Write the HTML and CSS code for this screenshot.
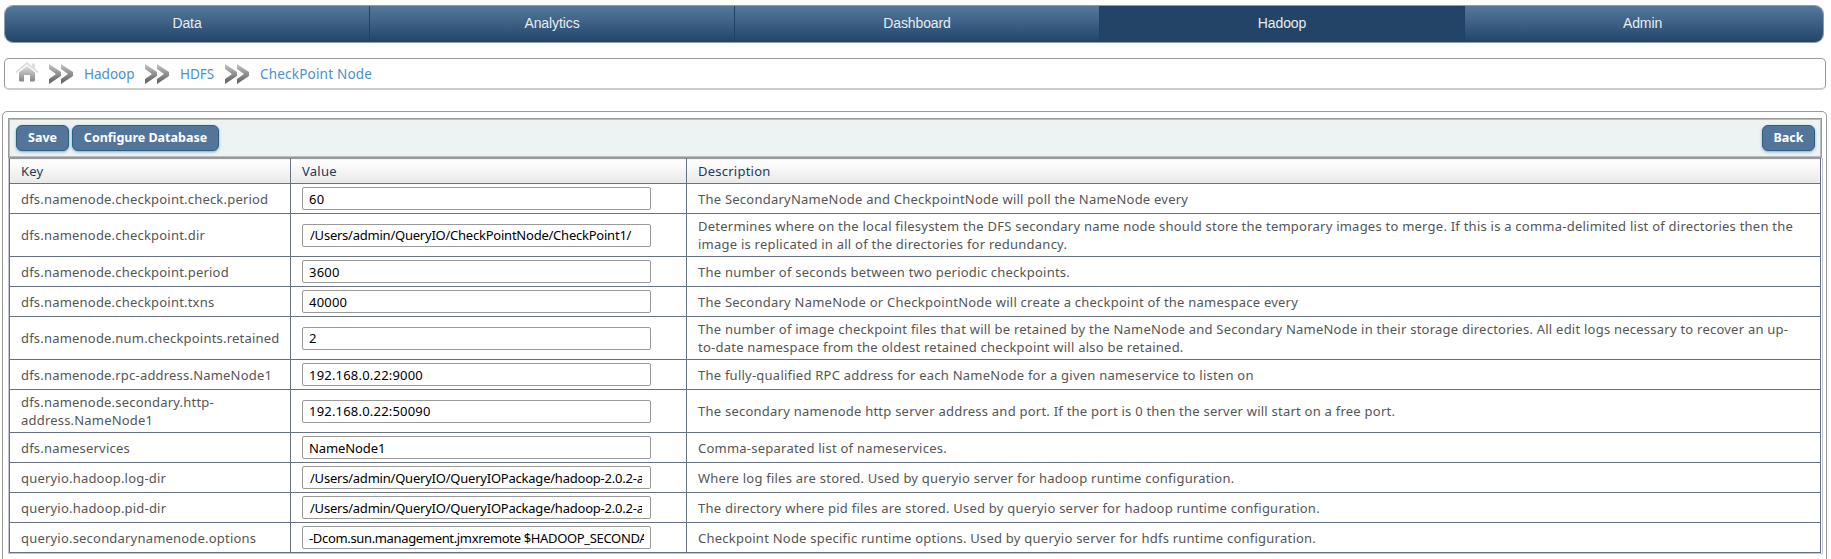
FILE: index.html
```html
<!DOCTYPE html>
<html lang="en">
<head>
<meta charset="utf-8">
<title>CheckPoint Node</title>
<link rel="stylesheet" href="styles.css">
</head>
<body>
<svg class="defs" width="0" height="0" aria-hidden="true">
  <defs>
    <linearGradient id="grey" x1="0" y1="0" x2="0" y2="1"><stop offset="0" stop-color="#c4c4c4"/><stop offset="1" stop-color="#5c5c5c"/></linearGradient>
    <linearGradient id="house" x1="0" y1="0" x2="0" y2="1"><stop offset="0" stop-color="#dedede"/><stop offset="1" stop-color="#858585"/></linearGradient>
    <symbol id="chev" viewBox="0 0 26 22"><path fill="url(#grey)" d="M1 1 13 9v4L1 21v-5l7-5-7-5zM13 1l12 8v4l-12 8v-5l7-5-7-5z"/></symbol>
  </defs>
</svg>
<nav class="nav">
  <a>Data</a><a>Analytics</a><a>Dashboard</a><a class="active">Hadoop</a><a>Admin</a>
</nav>
<div class="crumbs">
  <svg class="home" viewBox="0 0 24 20"><path fill="#dedede" d="M12 0 17 4V1.500h3V6.500l4 3.500-1.500 1L12 2.500 1.500 11 0 10z"/><path fill="url(#house)" d="M12 4 20 10.500V18q0 1.500-1.500 1.500H15V13H9v6.500H5.500Q4 19.500 4 18v-7.500z"/></svg>
  <svg class="chev"><use href="#chev"/></svg><a class="c1">Hadoop</a>
  <svg class="chev"><use href="#chev"/></svg><a class="c2">HDFS</a>
  <svg class="chev"><use href="#chev"/></svg><a class="c3">CheckPoint Node</a>
</div>
<main class="panel">
  <div class="toolbar">
    <button class="btn save">Save</button><button class="btn config">Configure Database</button><button class="btn back">Back</button>
  </div>
  <div class="frame">
  <table class="grid">
    <colgroup><col class="k"><col class="v"><col></colgroup>
    <thead><tr><th>Key</th><th>Value</th><th>Description</th></tr></thead>
    <tbody>
      <tr><td>dfs.namenode.checkpoint.check.period</td><td><input value="60"></td><td>The SecondaryNameNode and CheckpointNode will poll the NameNode every</td></tr>
      <tr class="tall"><td>dfs.namenode.checkpoint.dir</td><td><input class="path" value="/Users/admin/QueryIO/CheckPointNode/CheckPoint1/"></td><td>Determines where on the local filesystem the DFS secondary name node should store the temporary images to merge. If this is a comma-delimited list of directories then the<br>image is replicated in all of the directories for redundancy.</td></tr>
      <tr><td>dfs.namenode.checkpoint.period</td><td><input value="3600"></td><td>The number of seconds between two periodic checkpoints.</td></tr>
      <tr><td>dfs.namenode.checkpoint.txns</td><td><input value="40000"></td><td>The Secondary NameNode or CheckpointNode will create a checkpoint of the namespace every</td></tr>
      <tr class="tall"><td>dfs.namenode.num.checkpoints.retained</td><td><input value="2"></td><td>The number of image checkpoint files that will be retained by the NameNode and Secondary NameNode in their storage directories. All edit logs necessary to recover an up-<br>to-date namespace from the oldest retained checkpoint will also be retained.</td></tr>
      <tr><td>dfs.namenode.rpc-address.NameNode1</td><td><input value="192.168.0.22:9000"></td><td>The fully-qualified RPC address for each NameNode for a given nameservice to listen on</td></tr>
      <tr class="tall"><td>dfs.namenode.secondary.http-<br>address.NameNode1</td><td><input value="192.168.0.22:50090"></td><td>The secondary namenode http server address and port. If the port is 0 then the server will start on a free port.</td></tr>
      <tr><td>dfs.nameservices</td><td><input class="name" value="NameNode1"></td><td>Comma-separated list of nameservices.</td></tr>
      <tr><td>queryio.hadoop.log-dir</td><td><input class="path" value="/Users/admin/QueryIO/QueryIOPackage/hadoop-2.0.2-alpha/logs"></td><td>Where log files are stored. Used by queryio server for hadoop runtime configuration.</td></tr>
      <tr><td>queryio.hadoop.pid-dir</td><td><input class="path" value="/Users/admin/QueryIO/QueryIOPackage/hadoop-2.0.2-alpha/pids"></td><td>The directory where pid files are stored. Used by queryio server for hadoop runtime configuration.</td></tr>
      <tr><td>queryio.secondarynamenode.options</td><td><input class="opts" value="-Dcom.sun.management.jmxremote $HADOOP_SECONDARYNAMENODE_OPTS"></td><td>Checkpoint Node specific runtime options. Used by queryio server for hdfs runtime configuration.</td></tr>
    </tbody>
  </table>
  </div>
</main>
</body>
</html>
```
FILE: styles.css
```css
* { box-sizing: border-box; }
html, body { height: 559px; overflow: hidden; }
body { margin: 0; padding: 5px 4px 0 2px; background: #fff; font-family: "Noto Sans", sans-serif; font-size: 13px; color: #555; }
.defs { position: absolute; }
.nav { display: grid; grid-template-columns: 365px 365px 365px 365px 1fr; width: 1820px; height: 38px; margin-left: 2px; border: 1px solid #8e9cad; border-radius: 9px; overflow: hidden; }
.nav a { display: flex; align-items: center; justify-content: center; padding-bottom: 3px; font: 14px "Liberation Sans", Arial, sans-serif; letter-spacing: -.1px; color: #e8edf2; background: linear-gradient(#54799d, #234468); border-right: 1px solid #1f4165; }
.nav a:last-child { border-right: 0; padding-right: 3px; }
.nav a.active { background: #234466; }
.crumbs { display: flex; align-items: center; width: 1822px; height: 32px; margin: 15px 0 0 2px; padding: 1px 0 0 10px; border: 1px solid #999; border-bottom: 2px solid #ccc; border-radius: 5px; color: #4a8fd3; font-size: 13.5px; }
.crumbs a { white-space: nowrap; }
.home { width: 24px; height: 20px; margin-top: -4px; }
.chev { width: 26px; height: 22px; margin: 0 10px 0 9px; }
.c1 { width: 51px; } .c2 { width: 35px; } .c3 { letter-spacing: .2px; }
.panel { height: 470px; margin-top: 21px; padding: 6px 4px 0 5px; border: 1px solid #999; border-radius: 5px; width: 1825px; }
.toolbar { display: flex; gap: 3px; height: 40px; padding: 6px 6px 0 7px; background: #edf3f3; border: 1px solid #999; box-shadow: inset 0 0 0 1px #bbb; }
.btn { height: 26px; padding: 0 0 2px; border: 1px solid #2e6181; border-radius: 6px; background: #537599; color: #fff; font: bold 12.5px "Noto Sans", sans-serif; box-shadow: 0 1px 3px #7ba9c0; }
.save { width: 53px; } .config { width: 147px; } .back { width: 53px; margin-left: auto; }
.frame { border-left: 1px solid #c3c7d8; border-right: 1px solid #c3c7d8; border-bottom: 1px solid #c3c7d8; padding-right: 1px; width: 1815px; }
.grid { width: 1812px; border-collapse: collapse; table-layout: fixed; }
.k { width: 281px; } .v { width: 396px; }
.grid th, .grid td { border: 1px solid #697282; padding: 0 0 0 11px; text-align: left; line-height: 18px; letter-spacing: .235px; white-space: nowrap; }
.grid th { height: 25px; font-weight: normal; color: #1f3a5b; background: linear-gradient(#fff, #e9e9e9); border-top-color: #999; }
.grid td { height: 30px; }
.tall td { height: 43px; }
.grid td:nth-child(1) { letter-spacing: .2px; }
input { display: block; width: 349px; height: 23px; padding: 0 6px; border: 1px solid #999; border-radius: 2px; font: 13px "Noto Sans", sans-serif; letter-spacing: .2px; color: #000; background: #fff; }
input.name { letter-spacing: -.1px; }
input.path { padding-left: 7px; letter-spacing: -.23px; }
input.path[value*="Package"] { padding-right: 8px; letter-spacing: -.22px; }
input.opts { letter-spacing: -.34px; }
```
